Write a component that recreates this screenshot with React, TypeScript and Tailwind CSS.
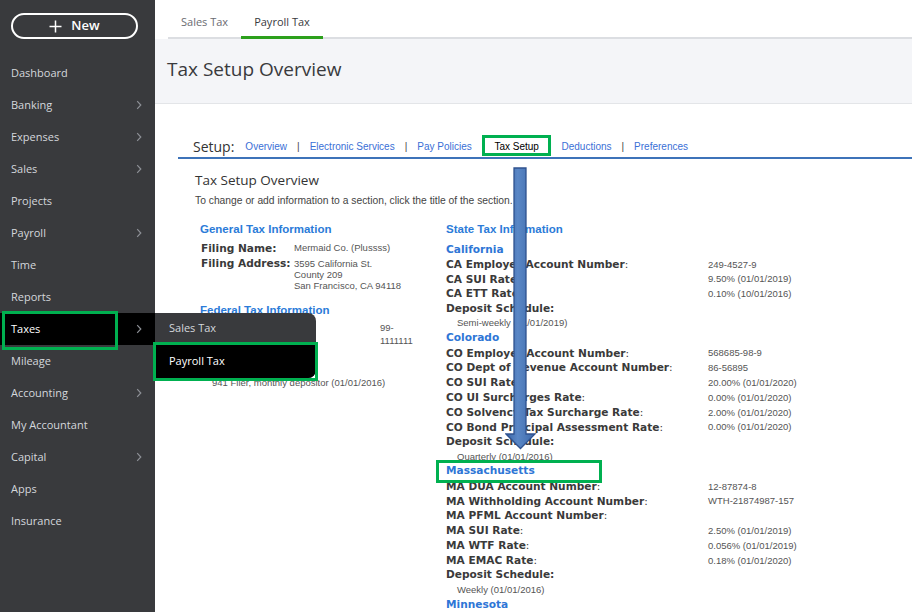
import React from "react";

type NavItem = { label: string; more?: boolean; active?: boolean };

const navItems: NavItem[] = [
  { label: "Dashboard" },
  { label: "Banking", more: true },
  { label: "Expenses", more: true },
  { label: "Sales", more: true },
  { label: "Projects" },
  { label: "Payroll", more: true },
  { label: "Time" },
  { label: "Reports" },
  { label: "Taxes", more: true, active: true },
  { label: "Mileage" },
  { label: "Accounting", more: true },
  { label: "My Accountant" },
  { label: "Capital", more: true },
  { label: "Apps" },
  { label: "Insurance" },
];

type Line =
  | { kind: "state"; text: string; marked?: boolean }
  | { kind: "row"; label: string; value?: string }
  | { kind: "schedule" }
  | { kind: "note"; text: string };

const stateLines: Line[] = [
  { kind: "state", text: "California" },
  { kind: "row", label: "CA Employer Account Number", value: "249-4527-9" },
  { kind: "row", label: "CA SUI Rate", value: "9.50% (01/01/2019)" },
  { kind: "row", label: "CA ETT Rate", value: "0.10% (10/01/2016)" },
  { kind: "schedule" },
  { kind: "note", text: "Semi-weekly (01/01/2019)" },
  { kind: "state", text: "Colorado" },
  { kind: "row", label: "CO Employer Account Number", value: "568685-98-9" },
  { kind: "row", label: "CO Dept of Revenue Account Number", value: "86-56895" },
  { kind: "row", label: "CO SUI Rate", value: "20.00% (01/01/2020)" },
  { kind: "row", label: "CO UI Surcharges Rate", value: "0.00% (01/01/2020)" },
  { kind: "row", label: "CO Solvency Tax Surcharge Rate", value: "2.00% (01/01/2020)" },
  { kind: "row", label: "CO Bond Principal Assessment Rate", value: "0.00% (01/01/2020)" },
  { kind: "schedule" },
  { kind: "note", text: "Quarterly (01/01/2016)" },
  { kind: "state", text: "Massachusetts", marked: true },
  { kind: "row", label: "MA DUA Account Number", value: "12-87874-8" },
  { kind: "row", label: "MA Withholding Account Number", value: "WTH-21874987-157" },
  { kind: "row", label: "MA PFML Account Number" },
  { kind: "row", label: "MA SUI Rate", value: "2.50% (01/01/2019)" },
  { kind: "row", label: "MA WTF Rate", value: "0.056% (01/01/2019)" },
  { kind: "row", label: "MA EMAC Rate", value: "0.18% (01/01/2020)" },
  { kind: "schedule" },
  { kind: "note", text: "Weekly (01/01/2016)" },
  { kind: "state", text: "Minnesota" },
];

const labelFont = "font-['DejaVu_Sans',Verdana,sans-serif] text-[10.6px] font-bold text-[#3a3a3a]";
const valueFont = "font-['Liberation_Sans',Arial,sans-serif] text-[9.5px] text-[#555]";
const sectionFont = "font-['Liberation_Sans',Arial,sans-serif] text-[11.5px] font-bold text-[#2b7bd8]";

function Chevron() {
  return (
    <svg width="6" height="10" viewBox="0 0 6 10" className="shrink-0">
      <path d="M1.2 1.2 4.8 5 1.2 8.8" fill="none" stroke="#8d9096" strokeWidth="1.2" />
    </svg>
  );
}

function Sidebar() {
  return (
    <aside className="flex h-full w-[155px] shrink-0 flex-col bg-[#393a3d] pt-[13px]">
      <button className="mx-[11px] flex h-[26px] w-[127px] items-center justify-center gap-[9px] rounded-full border-2 border-white text-[13px] font-semibold text-white">
        <svg width="13" height="13" viewBox="0 0 13 13">
          <path d="M6.5 0.5v12M0.5 6.5h12" stroke="white" strokeWidth="1.5" />
        </svg>
        New
      </button>
      <nav className="mt-[18px] flex flex-col">
        {navItems.map((item) => (
          <div
            key={item.label}
            className={`relative flex h-8 items-center justify-between pl-[11px] pr-[13px] text-[11px] font-medium ${
              item.active ? "bg-black text-white" : "text-[#d4d7dc]"
            }`}
          >
            <span>{item.label}</span>
            {item.more && <Chevron />}
            {item.active && (
              <span className="absolute left-[2px] top-[-2px] h-[39px] w-[116px] border-[3px] border-[#00b050]" />
            )}
          </div>
        ))}
      </nav>
    </aside>
  );
}

function TaxesFlyout() {
  return (
    <div className="absolute left-[155px] top-[313px] flex w-[161px] flex-col rounded-r-lg bg-[#393a3d] text-[11px] font-medium">
      <div className="flex h-[31px] items-center pl-[14px] text-[#d4d7dc]">Sales Tax</div>
      <div className="relative flex h-[34px] items-center rounded-br-lg bg-black pl-[14px] text-white">
        Payroll Tax
        <span className="absolute left-[-2px] top-[-2px] h-[39px] w-[165px] border-[3px] border-[#00b050]" />
      </div>
    </div>
  );
}

function TabBar() {
  return (
    <div className="flex h-[39px] pl-[13px]">
      <div className="flex flex-1 border-b-2 border-[#dcdee2] pt-[7px] text-[11px]">
        <div className="flex items-center px-[13px] text-[#6b6c72]">Sales Tax</div>
        <div className="relative flex items-center px-[13px] font-medium text-[#393a3d]">
          Payroll Tax
          <span className="absolute bottom-[-2px] left-0 right-0 h-[3px] bg-[#2ca01c]" />
        </div>
      </div>
    </div>
  );
}

function PageHeader() {
  return (
    <div className="flex h-[65px] items-center border-b border-[#e3e5e8] bg-[#f4f5f8] pb-[3px] pl-[12px]">
      <h1 className="text-[19px] text-[#393a3d]">Tax Setup Overview</h1>
    </div>
  );
}

function SetupNav() {
  const links = ["Overview", "Electronic Services", "Pay Policies", "Tax Setup", "Deductions", "Preferences"];
  return (
    <div className="mt-[32px] flex h-[23px] items-center border-b-2 border-[#3d73b9] pl-[15px]">
      <span className="mr-[11px] text-[14px] text-[#333]">Setup:</span>
      {links.map((link, i) => (
        <React.Fragment key={link}>
          {i > 0 && (
            <span className="mx-[10px] font-['Liberation_Sans',Arial,sans-serif] text-[10px] text-[#444]">|</span>
          )}
          {link === "Tax Setup" ? (
            <span className="relative font-['Liberation_Sans',Arial,sans-serif] text-[10px] text-black">
              {link}
              <span className="absolute left-[-12px] right-[-12px] top-[-4px] h-[21px] border-[3px] border-[#00b050] bg-transparent" />
            </span>
          ) : (
            <span className="font-['Liberation_Sans',Arial,sans-serif] text-[10px] text-[#3a6fd6]">{link}</span>
          )}
        </React.Fragment>
      ))}
    </div>
  );
}

function Colon() {
  return <span className="font-normal">:</span>;
}

function StateLine({ line }: { line: Line }) {
  if (line.kind === "state") {
    return (
      <div className="relative flex h-[14.8px] items-center">
        <span className={`${labelFont} !text-[#2e76d6]`}>{line.text}</span>
        {line.marked && (
          <span className="absolute left-[-10px] top-[-4px] h-[23px] w-[166px] border-[3px] border-[#00b050]" />
        )}
      </div>
    );
  }
  if (line.kind === "schedule") {
    return (
      <div className="flex h-[14.8px] items-center">
        <span className={labelFont}>Deposit Schedule:</span>
      </div>
    );
  }
  if (line.kind === "note") {
    return (
      <div className="flex h-[14.8px] items-center pl-[11px]">
        <span className={valueFont}>{line.text}</span>
      </div>
    );
  }
  return (
    <div className="grid h-[14.8px] grid-cols-[262px_1fr] items-center whitespace-nowrap">
      <span className={labelFont}>
        {line.label}
        <Colon />
      </span>
      <span className={valueFont}>{line.value}</span>
    </div>
  );
}

function GeneralColumn() {
  return (
    <div className="ml-[5px] w-[246px] shrink-0">
      <div className={`flex h-[15px] items-center ${sectionFont}`}>General Tax Information</div>
      <div className="mt-[4px] grid grid-cols-[93px_1fr] pl-[1px]">
        <div className={`flex h-[15px] items-center ${labelFont}`}>Filing Name:</div>
        <div className={`flex h-[15px] items-center ${valueFont}`}>Mermaid Co. (Plussss)</div>
        <div className={`flex h-[15px] items-center ${labelFont}`}>Filing Address:</div>
        <div className={`pt-[2px] leading-[11px] ${valueFont}`}>
          3595 California St.
          <br />
          County 209
          <br />
          San Francisco, CA 94118
        </div>
      </div>

      <div className={`mt-[12px] flex h-[15px] items-center ${sectionFont}`}>Federal Tax Information</div>
      {/* label cells sit under the open Taxes menu */}
      <div className="mt-[3px] grid grid-cols-[179px_40px] pl-[1px]">
        <div className="h-[15px]" />
        <div className={`leading-[13px] ${valueFont}`}>99-1111111</div>
      </div>
      <div className="mt-[14px] h-[15px]" />
      <div className={`flex h-[14px] items-center pl-[12px] ${valueFont}`}>941 Filer, monthly depositor (01/01/2016)</div>
    </div>
  );
}

function StateColumn() {
  return (
    <div className="flex-1">
      <div className={`flex h-[15px] items-center ${sectionFont}`}>State Tax Information</div>
      <div className="mt-[5px] flex flex-col">
        {stateLines.map((line, i) => (
          <StateLine key={i} line={line} />
        ))}
      </div>
    </div>
  );
}

function SetupPanel() {
  return (
    <div className="flex flex-col pl-[23px]">
      <SetupNav />
      <div className="pl-[17px]">
        <h2 className="mt-[12px] text-[13.5px] leading-[18px] text-[#333]">Tax Setup Overview</h2>
        <p className="mt-[6px] font-['Liberation_Sans',Arial,sans-serif] text-[10.3px] leading-[12px] text-[#444]">
          To change or add information to a section, click the title of the section.
        </p>
        <div className="mt-[15.5px] flex">
          <GeneralColumn />
          <StateColumn />
        </div>
      </div>
    </div>
  );
}

function DownArrow() {
  return (
    <svg className="pointer-events-none absolute left-[505px] top-[166px]" width="32" height="285" viewBox="0 0 32 285">
      <defs>
        <linearGradient id="shaft" x1="0" x2="1" y1="0" y2="0">
          <stop offset="0" stopColor="#3a65a5" />
          <stop offset="0.4" stopColor="#5a87c6" />
          <stop offset="1" stopColor="#3d69a9" />
        </linearGradient>
      </defs>
      <path
        d="M9 2H21V268H30L15.5 282.5 1 268H9Z"
        fill="url(#shaft)"
        stroke="#2f528f"
        strokeWidth="1.3"
        strokeLinejoin="miter"
      />
    </svg>
  );
}

export default function App() {
  return (
    <div className="relative flex h-[612px] w-[912px] overflow-hidden bg-white font-['Open_Sans',sans-serif]">
      <Sidebar />
      <main className="flex min-w-0 flex-1 flex-col">
        <TabBar />
        <PageHeader />
        <SetupPanel />
      </main>
      <TaxesFlyout />
      <DownArrow />
    </div>
  );
}
